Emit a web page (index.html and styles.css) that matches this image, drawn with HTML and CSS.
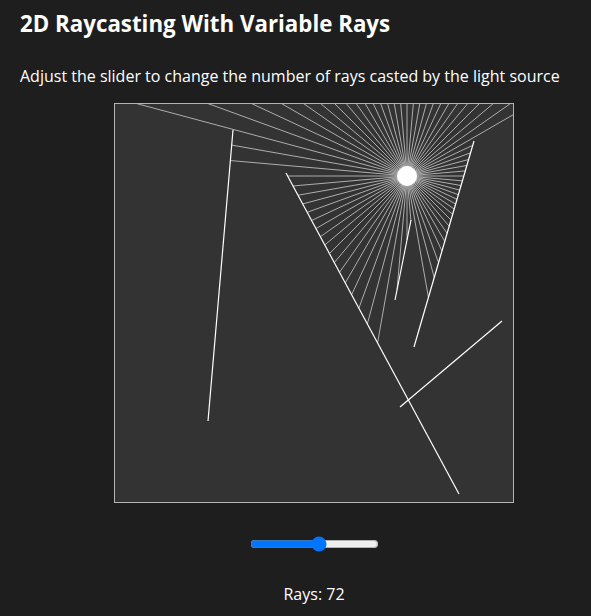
FILE: index.html
```html
<!DOCTYPE html>
<html lang="en">
<head>
<meta charset="utf-8">
<title>2D Raycasting With Variable Rays</title>
<link rel="stylesheet" href="styles.css">
</head>
<body>
<h1 class="title">2D Raycasting With Variable Rays</h1>
<p class="lead">Adjust the slider to change the number of rays casted by the light source</p>
<div class="stage">
  <canvas id="scene" class="scene" width="400" height="400"></canvas>
  <input id="rays" class="slider" type="range" min="4" max="128" value="72">
  <p class="count">Rays: <span id="rayCount">72</span></p>
</div>
<script src="script.js"></script>
</body>
</html>
```

FILE: styles.css
```css
html, body {
  background: #1e1e1e;
}
body {
  margin: 0;
  padding: 0 20px;
  color: #ffffff;
  font-family: "Open Sans", "Noto Sans", sans-serif;
}
.title {
  font-size: 22.3px;
  font-weight: 700;
  margin: 9px 0 0;
  line-height: 30px;
}
.lead {
  font-size: 16px;
  margin: 26px 0 0;
  line-height: 22px;
}
.stage {
  display: flex;
  flex-direction: column;
  align-items: center;
  padding-left: 37px;
}
.scene {
  display: block;
  margin-top: 16px;
  background: #333333;
}
.slider {
  margin: 33px 0 0;
  width: 129px;
}
.count {
  font-size: 16px;
  margin: 31px 0 0;
  line-height: 22px;
}
```

FILE: script.js
```js
(function () {
  var canvas = document.getElementById('scene');
  var ctx = canvas.getContext('2d');
  var W = canvas.width, H = canvas.height;
  var light = { x: 293, y: 73 };
  var walls = [
    [119, 27, 94, 318],
    [172, 70, 345, 391],
    [360, 38, 300, 244],
    [297, 117, 281, 197],
    [388, 218, 286, 304],
    [0, 0, W, 0],
    [W, 0, W, H],
    [W, H, 0, H],
    [0, H, 0, 0]
  ];

  function cast(dx, dy) {
    var best = Infinity, hx = null, hy = null;
    for (var i = 0; i < walls.length; i++) {
      var w = walls[i];
      var x1 = w[0], y1 = w[1], x2 = w[2], y2 = w[3];
      var x3 = light.x, y3 = light.y, x4 = light.x + dx, y4 = light.y + dy;
      var den = (x1 - x2) * (y3 - y4) - (y1 - y2) * (x3 - x4);
      if (den === 0) continue;
      var t = ((x1 - x3) * (y3 - y4) - (y1 - y3) * (x3 - x4)) / den;
      var u = -((x1 - x2) * (y1 - y3) - (y1 - y2) * (x1 - x3)) / den;
      if (t >= 0 && t <= 1 && u > 0 && u < best) {
        best = u;
        hx = x1 + t * (x2 - x1);
        hy = y1 + t * (y2 - y1);
      }
    }
    return hx === null ? null : { x: hx, y: hy };
  }

  function draw(n) {
    ctx.clearRect(0, 0, W, H);
    ctx.fillStyle = '#333333';
    ctx.fillRect(0, 0, W, H);
    ctx.lineWidth = 1;
    ctx.strokeStyle = 'rgba(255,255,255,0.6)';
    for (var i = 0; i < n; i++) {
      var a = i * Math.PI * 2 / n;
      var p = cast(Math.cos(a), Math.sin(a));
      if (!p) continue;
      ctx.beginPath();
      ctx.moveTo(light.x, light.y);
      ctx.lineTo(p.x, p.y);
      ctx.stroke();
    }
    ctx.strokeStyle = '#ffffff';
    ctx.lineWidth = 1.2;
    for (var j = 0; j < 5; j++) {
      var w = walls[j];
      ctx.beginPath();
      ctx.moveTo(w[0], w[1]);
      ctx.lineTo(w[2], w[3]);
      ctx.stroke();
    }
    ctx.lineWidth = 1;
    ctx.strokeStyle = '#b4b4b4';
    ctx.strokeRect(0.5, 0.5, W - 1, H - 1);
    ctx.fillStyle = '#ffffff';
    ctx.beginPath();
    ctx.arc(light.x, light.y, 10, 0, Math.PI * 2);
    ctx.fill();
  }

  var slider = document.getElementById('rays');
  var label = document.getElementById('rayCount');
  function update() {
    var n = parseInt(slider.value, 10);
    label.textContent = n;
    draw(n);
  }
  slider.addEventListener('input', update);
  update();
})();
```
